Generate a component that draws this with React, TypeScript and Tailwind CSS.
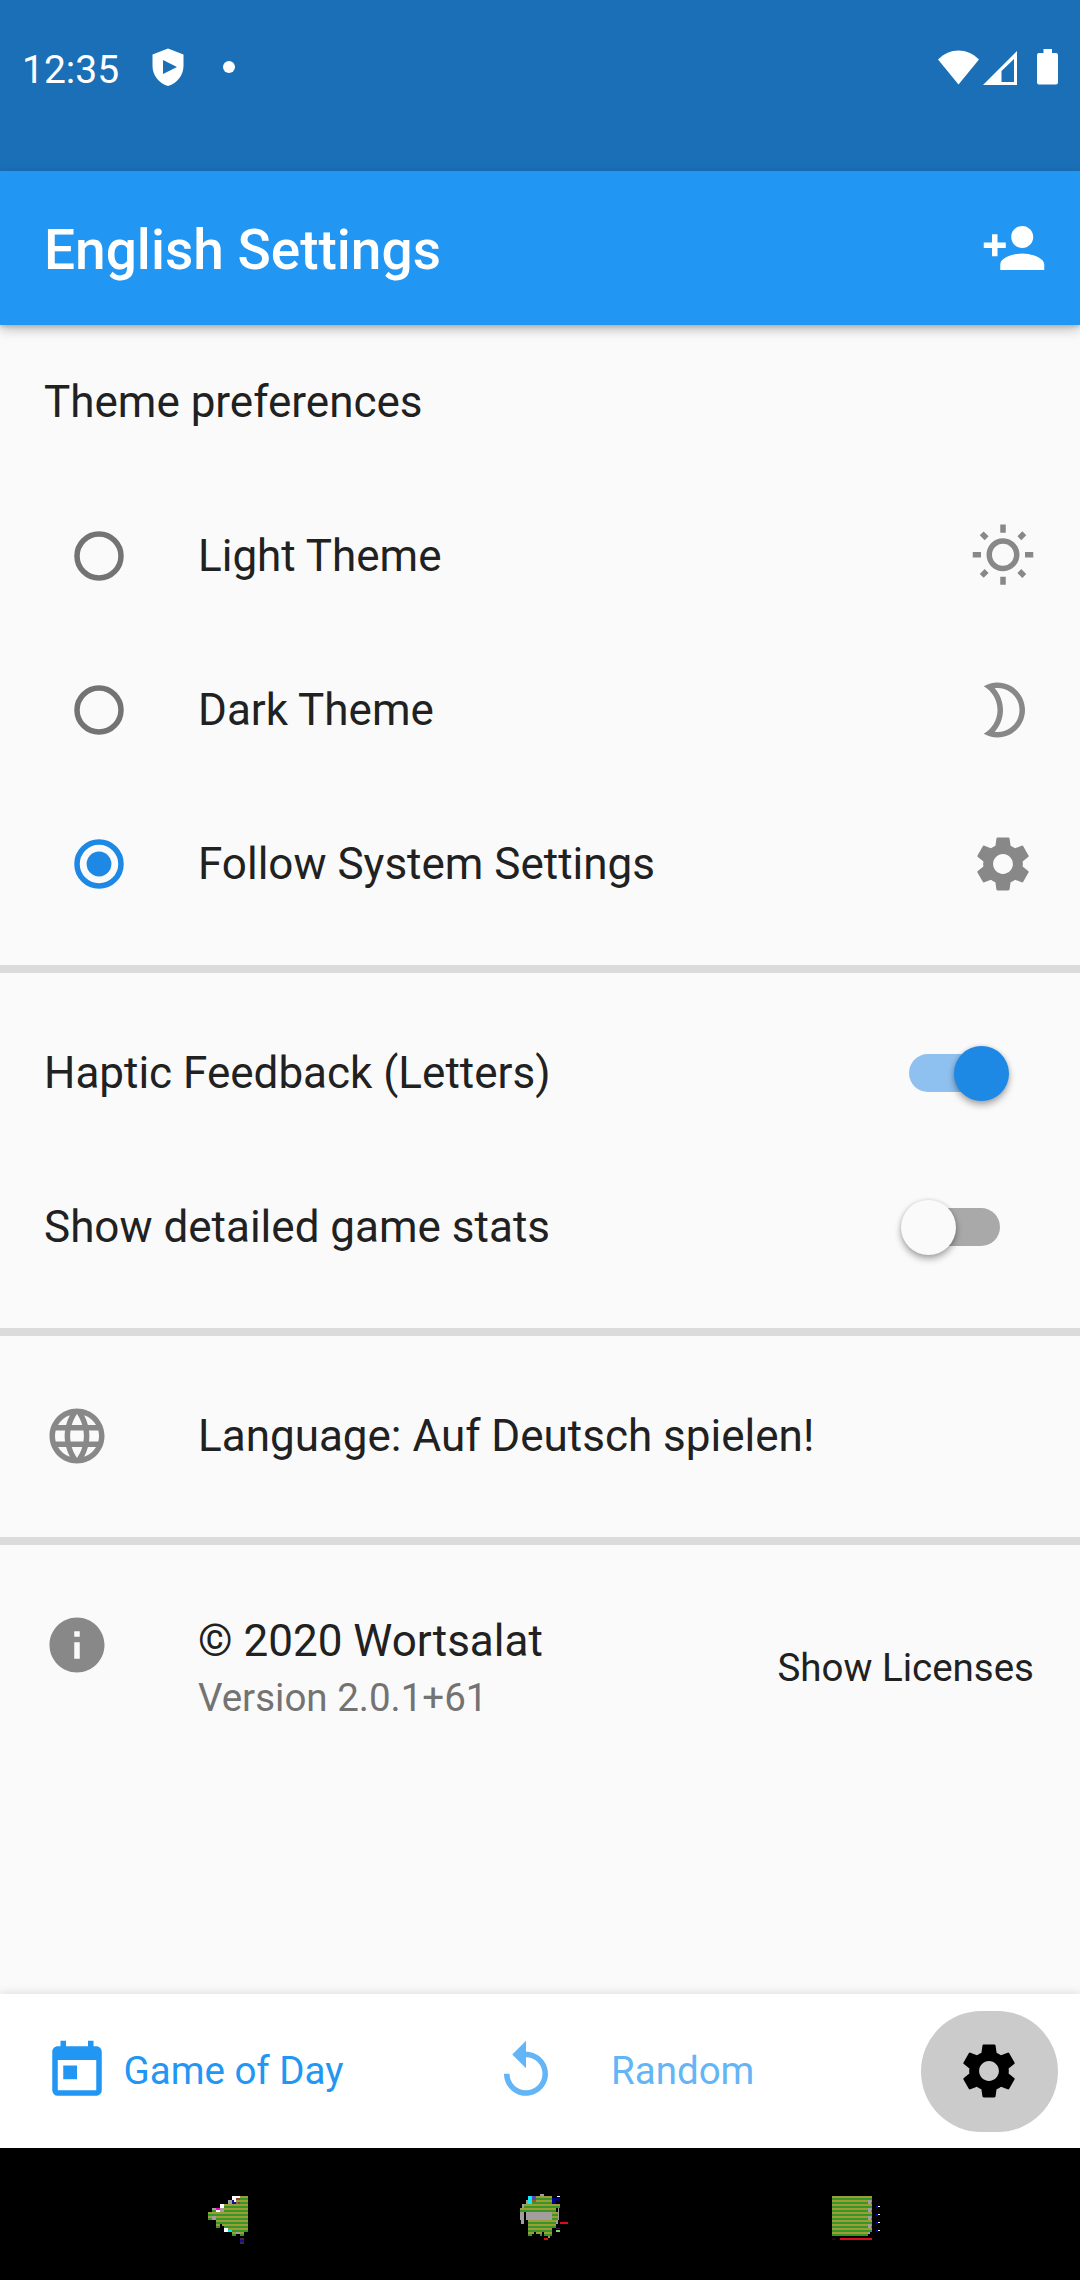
import type { ReactNode } from "react";
import { MdInfo, MdLanguage, MdOutlineWbSunny, MdPersonAdd, MdReplay, MdSettings, MdToday } from "react-icons/md";

function Moon() {
  return (
    <svg viewBox="0 0 24 24" className="size-[66px]" fill="currentColor">
      <path d="M10 4c4.41 0 8 3.59 8 8s-3.59 8-8 8c-.34 0-.68-.02-1.01-.07C10.9 17.77 12 14.95 12 12s-1.1-5.77-3.01-7.93C9.32 4.02 9.66 4 10 4m0-2c-1.82 0-3.53.5-5 1.35C7.99 5.08 10 8.3 10 12s-2.01 6.92-5 8.65C6.47 21.5 8.18 22 10 22c5.52 0 10-4.48 10-10S15.52 2 10 2z" />
    </svg>
  );
}

function StatusBar() {
  return (
    <div className="flex h-[171px] items-start bg-[#1a6fb7] pl-[22px] pr-[22px] text-white">
      <span className="mt-[48px] w-[130px] text-[39px] leading-[45px]">12:35</span>
      <svg viewBox="0 0 32 38" className="mt-[48px] h-[38px] w-[32px]" fill="currentColor">
        <path
          fillRule="evenodd"
          d="M16 .5L31.5 6.5V18C31.5 27 25.5 35 16 38C6.500 35 .5 27 .5 18V6.500ZM11 12V26L25 19Z"
        />
      </svg>
      <span className="ml-[39px] mt-[61px] size-3 rounded-full bg-white" />
      <svg viewBox="0 0 42 35" className="ml-auto mt-[50px] h-[35px] w-[42px]" fill="currentColor">
        <path d="M0 9.500C12 -2.500 29 -2.500 41 9.500L20.500 34.500Z" />
      </svg>
      <svg viewBox="0 0 34 34" className="ml-[3px] mt-[51px] size-[34px]" fill="currentColor">
        <path fillRule="evenodd" d="M34 0V34H0ZM31 8L18.500 20V31H31Z" />
      </svg>
      <svg viewBox="0 0 21 36" className="ml-[20px] mt-[49px] h-[36px] w-[21px]" fill="currentColor">
        <path d="M6.500 0H15V4H19Q21 4 21 6V33.500Q21 35.500 19 35.500H2Q0 35.500 0 33.500V6Q0 4 2 4H6.500Z" />
      </svg>
    </div>
  );
}

function AppBar() {
  return (
    <header className="relative z-10 flex h-[154px] items-center justify-between bg-[#2196f3] pl-11 pr-[33px] text-white shadow-[0_5px_11px_rgba(0,0,0,0.22),0_2px_4px_rgba(0,0,0,0.14)]">
      <h1 className="pt-[3px] text-[55px] font-medium leading-[64px]">English Settings</h1>
      <MdPersonAdd className="size-[66px]" />
    </header>
  );
}

function Radio({ checked }: { checked: boolean }) {
  return (
    <svg viewBox="0 0 50 50" className={checked ? "size-[50px] text-[#1e88e5]" : "size-[50px] text-[#737373]"}>
      <circle cx="25" cy="25" r="22" fill="none" stroke="currentColor" strokeWidth="5.5" />
      {checked && <circle cx="25" cy="25" r="12.4" fill="currentColor" />}
    </svg>
  );
}

function RadioRow({ label, checked = false, children }: { label: string; checked?: boolean; children: ReactNode }) {
  return (
    <div className="flex h-[154px] items-center pl-[74px] pr-11">
      <Radio checked={checked} />
      <span className="ml-[74px] flex-1">{label}</span>
      <span className="text-[#888888]">{children}</span>
    </div>
  );
}

function Switch({ on }: { on: boolean }) {
  return (
    <span
      className={
        on
          ? "relative h-[38.5px] w-[91px] rounded-full bg-[#8ec1f0]"
          : "relative h-[38.5px] w-[91px] rounded-full bg-[#a9a9a9]"
      }
    >
      <span
        className={
          on
            ? "absolute -right-[8.5px] -top-2 size-[55px] rounded-full bg-[#1e88e5] shadow-[0_4px_7px_rgba(0,0,0,0.32),0_0_4px_rgba(0,0,0,0.12)]"
            : "absolute -left-[8.5px] -top-2 size-[55px] rounded-full bg-[#fafafa] shadow-[0_4px_7px_rgba(0,0,0,0.32),0_0_4px_rgba(0,0,0,0.12)]"
        }
      />
    </span>
  );
}

function SwitchRow({ label, on }: { label: string; on: boolean }) {
  return (
    <div className="flex h-[154px] items-center justify-between pl-11 pr-[80px]">
      <span>{label}</span>
      <Switch on={on} />
    </div>
  );
}

function Divider() {
  return (
    <div className="flex h-[55px] items-center">
      <div className="h-[8px] w-full bg-[#dbdbdb]" />
    </div>
  );
}

function BottomBar() {
  return (
    <nav className="relative z-10 flex h-[154px] items-center bg-white pl-11 pr-[22px] text-[38.5px] leading-[45px] shadow-[0_-2px_8px_rgba(0,0,0,0.10)]">
      <span className="flex w-[449px] items-center gap-[13.5px] text-[#2196f3]">
        <MdToday className="size-[66px]" />
        <span className="pb-[2px]">Game of Day</span>
      </span>
      <span className="flex items-center gap-[52px] text-[#64b5f6]">
        <MdReplay className="size-[66px]" />
        <span className="pb-[2px]">Random</span>
      </span>
      <span className="ml-auto flex h-[121px] w-[137.5px] items-center justify-center rounded-full bg-[#cbcbcb] text-black">
        <MdSettings className="size-[66px]" />
      </span>
    </nav>
  );
}

function Stripes({ id, offset }: { id: string; offset: number }) {
  return (
    <pattern id={id} y={offset} width="12" height="12" patternUnits="userSpaceOnUse">
      <rect width="12" height="6" fill="#9e9c35" />
      <rect y="6" width="12" height="6" fill="#37962a" />
    </pattern>
  );
}

function SystemNav() {
  return (
    <div className="flex h-[132px] items-start bg-black pl-[190px] pt-[22px]">
      <svg viewBox="0 0 300 270" className="h-[90px] w-[100px]" shapeRendering="crispEdges">
        <Stripes id="back" offset={78} />
        <path
          fill="url(#back)"
          d="M138 78H174V186H162V198H150V192H138V198H126V186H114V174H102V168H96V162H90V174H78V150H54V126H66V120H90V114H102V102H114V96H126V90H138Z"
        />
        <path fill="#a39d9f" d="M114 90h12v12h-12zM90 114h12v12h-12zM66 138h12v12h-12zM66 114h12v6h-12zM138 186h12v6h-12z" />
        <path fill="#fff" d="M126 78h24v12h-12v12h-12zM90 102h12v12h-12zM78 120h12v6h-12zM102 174h12v12h-12z" />
        <path fill="#ff00c8" d="M78 114h12v6h-12z" />
        <path fill="#10109a" d="M126 90h6v12h-6zM132 96h6v6h-6zM150 210h12v6h-12z" />
        <path fill="#a03c37" d="M138 84h12v6h-12zM144 96h6v6h-6z" />
        <path fill="#00e5ee" d="M114 180h12v6h-12z" />
        <path fill="#452448" d="M150 204h12v6h-12zM150 216h12v6h-12z" />
      </svg>
      <svg viewBox="0 0 300 270" className="ml-[210px] h-[90px] w-[100px]" shapeRendering="crispEdges">
        <Stripes id="home" offset={78} />
        <path fill="#a39d9f" d="M120 72h12v6h-12zM78 90h6v12h-6zM66 102h12v12h-12zM60 126h12v24h-12zM64 150h8v12h-8zM168 102h6v12h-6zM174 114h4v36h-4zM168 150h6v12h-6z" />
        <path
          fill="url(#home)"
          d="M84 78H156V102H180V114H168V126H174V150H168V174H156V198H150V204H144V198H132V186H126V198H120V192H108V186H102V192H96V198H84V126H60V114H72V102H84Z"
        />
        <path fill="#a39d9f" d="M78 126H156V150H78Z" />
        <path fill="#12eaf5" d="M84 78h12v24h-12z" />
        <path fill="#5a45c8" d="M96 78h12v12h-12z" />
        <path fill="#9a6010" d="M96 90h12v6h-12z" />
        <path fill="#000086" d="M156 84h24v6h-24zM156 90h12v12h-12zM174 90h4v4h-4z" />
        <path fill="#fff" d="M171 78h9v3h-9z" />
        <path fill="#e00a18" d="M180 156h24v6h-24zM132 204h12v6h-12z" />
        <path fill="#6edc6e" d="M168 180h12v6h-12z" />
        <path fill="#501050" d="M168 174h12v4h-12z" />
      </svg>
      <svg viewBox="0 0 300 270" className="ml-[210px] h-[90px] w-[100px]" shapeRendering="crispEdges">
        <Stripes id="recents" offset={78} />
        <path fill="url(#recents)" d="M66 78H186V186H180V192H174V198H66Z" />
        <path fill="#a39d9f" d="M174 90h10v12h-10zM174 114h10v12h-10zM174 138h10v12h-10zM174 162h10v12h-10zM174 186h6v6h-6z" />
        <path fill="#d80c18" d="M90 204h96v6h-96z" />
        <path fill="#180c10" d="M66 204h12v6h-12z" />
        <path fill="#0000c8" d="M198 108h6v7h-6zM198 132h6v7h-6zM198 156h6v7h-6zM198 180h6v7h-6z" />
        <path fill="#fff" d="M204 108h6v4h-6zM204 132h6v4h-6zM204 156h6v4h-6zM204 180h6v4h-6z" />
      </svg>
    </div>
  );
}

export default function App() {
  return (
    <div className="flex h-[2280px] w-[1080px] flex-col overflow-hidden bg-[#fafafa] font-['Roboto',sans-serif] text-[#212121]">
      <StatusBar />
      <AppBar />
      <main className="flex-1 text-[44px] leading-[52px]">
        <div className="flex h-[154px] items-center px-11">Theme preferences</div>
        <RadioRow label="Light Theme">
          <MdOutlineWbSunny className="size-[66px]" />
        </RadioRow>
        <RadioRow label="Dark Theme">
          <Moon />
        </RadioRow>
        <RadioRow label="Follow System Settings" checked>
          <MdSettings className="size-[66px]" />
        </RadioRow>
        <Divider />
        <SwitchRow label="Haptic Feedback (Letters)" on />
        <SwitchRow label="Show detailed game stats" on={false} />
        <Divider />
        <div className="flex h-[154px] items-center px-11">
          <MdLanguage className="size-[66px] text-[#888888]" />
          <span className="ml-[88px]">Language: Auf Deutsch spielen!</span>
        </div>
        <Divider />
        <div className="flex h-[198px] pl-11 pr-[46px]">
          <MdInfo className="mt-[44px] size-[66px] text-[#888888]" />
          <div className="ml-[88px] mt-[47px] flex flex-1 flex-col">
            <span>© 2020 Wortsalat</span>
            <span className="mt-[8px] text-[38.5px] leading-[45px] text-[#737373]">Version 2.0.1+61</span>
          </div>
          <span className="self-center text-[38.5px] leading-[45px]">Show Licenses</span>
        </div>
      </main>
      <BottomBar />
      <SystemNav />
    </div>
  );
}
